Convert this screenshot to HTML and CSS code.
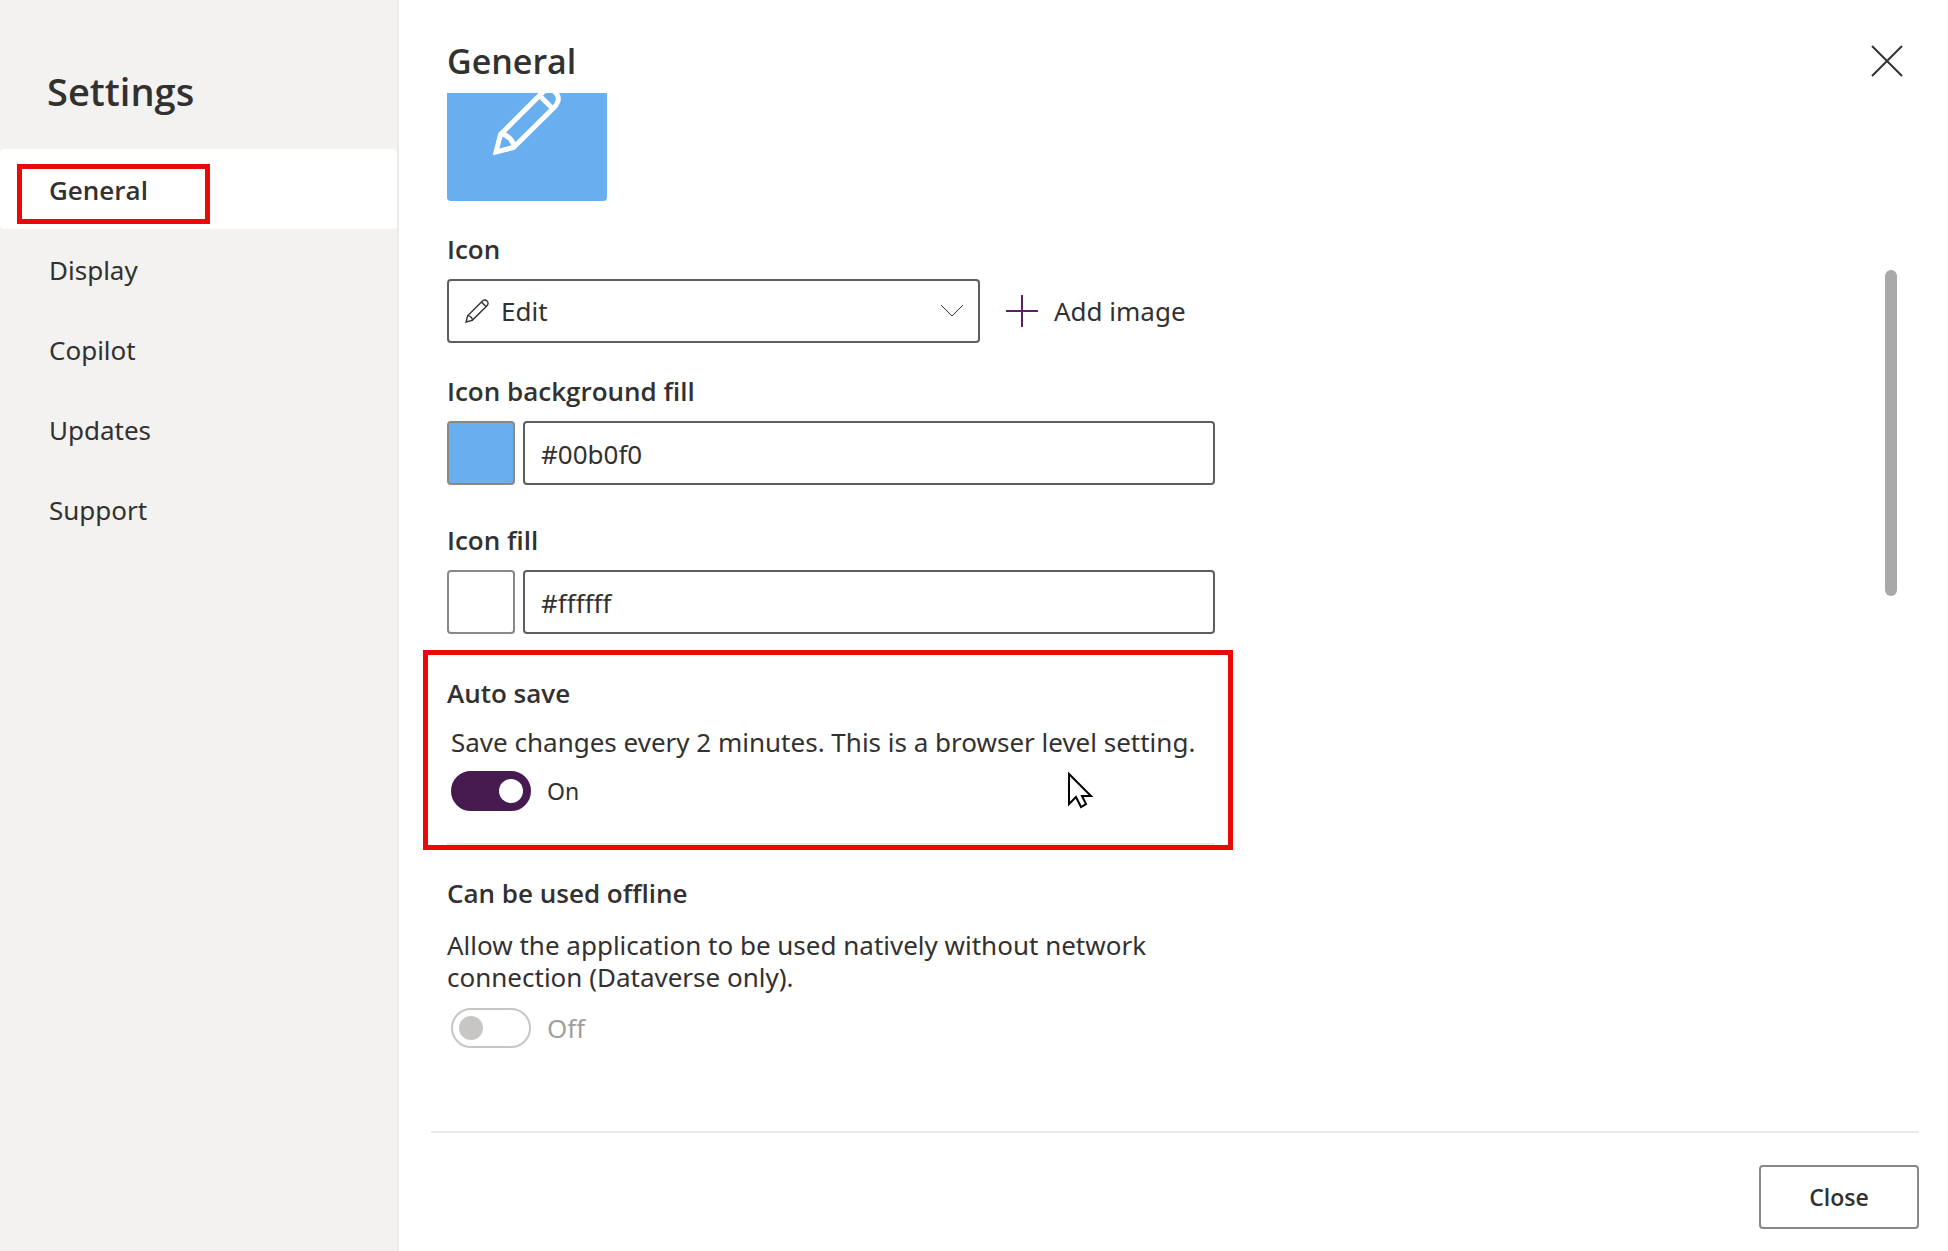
FILE: index.html
```html
<!DOCTYPE html>
<html lang="en">
<head>
<meta charset="utf-8">
<meta name="viewport" content="width=device-width, initial-scale=1">
<title>Settings</title>
<link rel="stylesheet" href="styles.css">
</head>
<body>
<svg class="symbols" aria-hidden="true">
  <symbol id="pencil" viewBox="0 0 68 68">
    <g fill="none" stroke="currentColor">
      <path d="M3 65 7.500 47.500 48 7C53 1.500 59 1.500 62.500 5.500C66.500 9.500 66.500 15 61 20.500L20.500 60.500Z"/>
      <path d="M46.500 8.500 59.500 21.500M7.500 47C14 47 21 54 21 60.500"/>
    </g>
  </symbol>
</svg>
<div class="dialog">
  <aside class="sidebar">
    <h1 class="sidebar-title">Settings</h1>
    <nav class="tabs">
      <a class="tab tab-selected" href="#general" aria-current="page">General</a>
      <a class="tab" href="#display">Display</a>
      <a class="tab" href="#copilot">Copilot</a>
      <a class="tab" href="#updates">Updates</a>
      <a class="tab" href="#support">Support</a>
    </nav>
  </aside>
  <main class="panel" id="general">
    <header class="panel-header">
      <h2 class="panel-title">General</h2>
      <button class="dismiss" type="button" aria-label="Dismiss">
        <svg width="32" height="32" viewBox="0 0 32 32" fill="none" stroke="currentColor" stroke-width="2"><path d="M1 1 31 31M31 1 1 31"/></svg>
      </button>
    </header>
    <div class="panel-body">
      <form class="form">
        <div class="preview"><svg class="preview-icon"><use href="#pencil"/></svg></div>

        <div class="field">
          <label class="label" for="icon">Icon</label>
          <div class="row row-icon">
            <div class="dropdown">
              <select class="dropdown-select" id="icon"><option>Edit</option></select>
              <svg class="dropdown-icon"><use href="#pencil"/></svg>
              <svg class="dropdown-caret" viewBox="0 0 24 14" fill="none" stroke="currentColor"><path d="M1 1 12 12 23 1"/></svg>
            </div>
            <button class="add-image" type="button">
              <svg class="plus" viewBox="0 0 32 32" fill="none" stroke="currentColor" stroke-width="2"><path d="M0 16H32M16 0V32"/></svg>
              Add image
            </button>
          </div>
        </div>

        <div class="field field-color">
          <label class="label" for="background">Icon background fill</label>
          <div class="row">
            <button class="swatch swatch-blue" type="button" aria-label="Pick background fill"></button>
            <input class="text" id="background" type="text" value="#00b0f0">
          </div>
        </div>

        <div class="field field-color">
          <label class="label" for="fill">Icon fill</label>
          <div class="row">
            <button class="swatch" type="button" aria-label="Pick icon fill"></button>
            <input class="text" id="fill" type="text" value="#ffffff">
          </div>
        </div>

        <section class="auto-save">
          <h3 class="label">Auto save</h3>
          <p class="hint hint-indent" id="auto-save-hint">Save changes every 2 minutes. This is a browser level setting.</p>
          <div class="switch-row">
            <input class="switch" id="auto-save" type="checkbox" role="switch" aria-describedby="auto-save-hint" checked>
            <label class="switch-label switch-label-small" for="auto-save">On</label>
          </div>
          <svg class="pointer" viewBox="0 0 26 38"><path d="M1 3V33L8 26 13 36 18 33 14 25H23Z" fill="#fff" stroke="#000" stroke-width="2"/></svg>
        </section>

        <section class="offline">
          <h3 class="label">Can be used offline</h3>
          <p class="hint" id="offline-hint">Allow the application to be used natively without network connection (Dataverse only).</p>
          <div class="switch-row">
            <input class="switch" id="offline" type="checkbox" role="switch" aria-describedby="offline-hint" disabled>
            <label class="switch-label switch-label-off" for="offline">Off</label>
          </div>
        </section>
      </form>
      <div class="scroll-thumb"></div>
    </div>
    <footer class="panel-footer">
      <button class="close" type="button">Close</button>
    </footer>
  </main>
</div>
</body>
</html>
```
FILE: styles.css
```css
*, *::before, *::after { box-sizing: border-box; }

body {
  margin: 0;
  background: #fff;
  color: #323130;
  font: 26px/32px "Noto Sans", "Open Sans", sans-serif;
}

h1, h2, h3, p { margin: 0; }

button, input, select {
  margin: 0;
  color: inherit;
  font: inherit;
}

.sidebar-title,
.tab-selected,
.panel-title,
.label,
.close {
  font-family: "Open Sans", "Noto Sans", sans-serif;
  font-weight: 600;
}

.symbols {
  position: absolute;
  width: 0;
  height: 0;
}

.dialog {
  display: flex;
  min-height: 100vh;
}

/* Sidebar */
.sidebar {
  flex: 0 0 399px;
  background: #f3f2f1;
  border-right: 2px solid #edebe9;
}

.sidebar-title {
  padding: 67px 47px 34px;
  font-size: 38px;
  line-height: 48px;
}

.tabs {
  display: flex;
  flex-direction: column;
}

.tab {
  position: relative;
  padding: 25px 49px 23px;
  border-radius: 4px;
  color: inherit;
  text-decoration: none;
}

.tab-selected { background: #fff; }

/* Red callout frames */
.tab-selected::after,
.auto-save::after {
  content: "";
  position: absolute;
  border: 5px solid #eb0808;
  pointer-events: none;
}

.tab-selected::after {
  top: 15px;
  bottom: 5px;
  left: 17px;
  width: 193px;
}

.auto-save::after { inset: 0 -18px -7px -24px; }

/* Panel */
.panel {
  display: flex;
  flex: 1;
  flex-direction: column;
  min-width: 0;
  padding: 0 29px 22px 32px;
}

.panel-header {
  display: flex;
  align-items: flex-start;
  justify-content: space-between;
  height: 93px;
  padding: 28px 16px 0;
}

.panel-title {
  padding-top: 9px;
  font-size: 34px;
  line-height: 48px;
}

.dismiss {
  display: flex;
  padding: 17px 0 0;
  border: 0;
  background: none;
}

.panel-body {
  display: flex;
  flex: 1;
  justify-content: space-between;
  overflow: hidden;
  margin-left: -32px;
  padding: 0 22px 0 48px;
}

.form { flex: 0 1 768px; }

.scroll-thumb {
  flex: none;
  width: 12px;
  height: 326px;
  margin-top: 177px;
  border-radius: 6px;
  background: #a9a9a9;
}

/* The preview is scrolled partly under the header */
.preview {
  display: flex;
  align-items: center;
  justify-content: center;
  width: 160px;
  height: 160px;
  margin-top: -52px;
  border-radius: 4px;
  background: #69afef;
  color: #fff;
}

.preview-icon {
  width: 68px;
  height: 68px;
  stroke-width: 5px;
}

.field { margin-top: 32px; }

.field-color + .field-color { margin-top: 39px; }

.label {
  display: block;
  margin-bottom: 14px;
  font-size: inherit;
}

.row {
  display: flex;
  gap: 8px;
}

.row-icon { gap: 26px; }

.dropdown {
  display: grid;
  flex: 0 1 533px;
  grid-template-columns: 24px 24px;
  align-items: center;
  justify-content: space-between;
  padding: 0 14px 0 16px;
  border: 2px solid #605e5c;
  border-radius: 4px;
}

.dropdown-select {
  grid-area: 1 / 1 / 2 / 3;
  height: 60px;
  margin: 0 -14px 0 -16px;
  padding: 0 50px 0 52px;
  border: 0;
  appearance: none;
  background: none;
}

.dropdown-icon {
  grid-area: 1 / 1;
  width: 24px;
  height: 24px;
  stroke-width: 4px;
  pointer-events: none;
}

.dropdown-caret {
  grid-area: 1 / 2;
  width: 24px;
  height: 14px;
  pointer-events: none;
}

.add-image {
  display: flex;
  align-items: center;
  gap: 16px;
  padding: 0;
  border: 0;
  background: none;
}

.plus {
  width: 32px;
  height: 32px;
  color: #5c2068;
}

.swatch {
  flex: none;
  width: 68px;
  height: 64px;
  border: 2px solid #8a8886;
  border-radius: 4px;
  background: #fff;
}

.swatch-blue { background: #69afef; }

.text {
  flex: 1;
  min-width: 0;
  height: 64px;
  padding: 2px 16px 0;
  border: 2px solid #605e5c;
  border-radius: 4px;
  background: #fff;
}

.auto-save {
  position: relative;
  margin-top: 16px;
  padding: 27px 0 32px;
  border-bottom: 2px solid #edebe9;
}

.auto-save .label { margin-bottom: 17px; }

.hint { margin-bottom: 15px; }

.hint-indent {
  margin: 0 0 13px 4px;
}

.switch-row {
  display: flex;
  align-items: center;
  gap: 16px;
  margin-left: 4px;
}

.switch {
  display: flex;
  align-items: center;
  width: 80px;
  height: 40px;
  padding: 0 6px;
  border: 2px solid #c8c6c4;
  border-radius: 20px;
  appearance: none;
  background: #fff;
}

.switch::before {
  content: "";
  width: 24px;
  height: 24px;
  border-radius: 12px;
  background: #c8c6c4;
}

.switch:checked {
  justify-content: flex-end;
  border-color: #471b4f;
  background: #471b4f;
}

.switch:checked::before { background: #fff; }

.switch-label-small { font-size: 23px; }

.switch-label-off { color: #a19f9d; }

/* Mouse pointer over the panel */
.pointer {
  position: absolute;
  top: 121px;
  right: 121px;
  width: 26px;
  height: 38px;
}

.offline { padding-top: 32px; }

.offline .label { margin-bottom: 20px; }

.panel-footer {
  display: flex;
  justify-content: flex-end;
  padding-top: 32px;
  border-top: 2px solid #edebe9;
}

.close {
  width: 160px;
  height: 64px;
  border: 2px solid #8a8886;
  border-radius: 4px;
  background: #fff;
  font-size: 23px;
}
```
